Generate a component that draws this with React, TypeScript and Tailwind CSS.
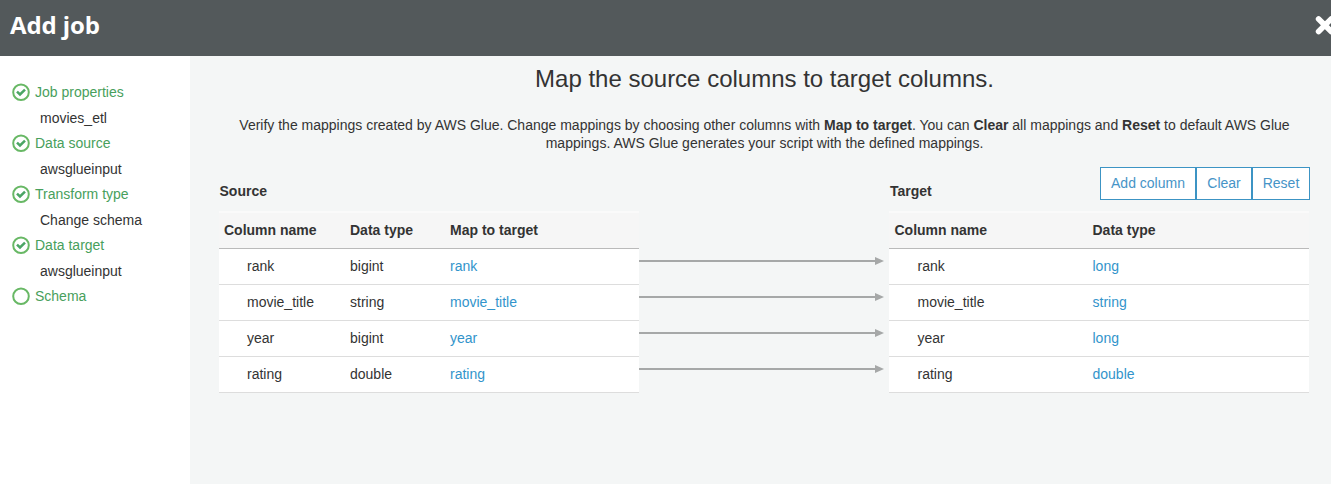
import React from "react";

const steps = [
  { label: "Job properties", value: "movies_etl", done: true },
  { label: "Data source", value: "awsglueinput", done: true },
  { label: "Transform type", value: "Change schema", done: true },
  { label: "Data target", value: "awsglueinput", done: true },
  { label: "Schema", value: "", done: false },
];

const rows = [
  { name: "rank", source: "bigint", target: "long" },
  { name: "movie_title", source: "string", target: "string" },
  { name: "year", source: "bigint", target: "long" },
  { name: "rating", source: "double", target: "double" },
];

function StepIcon({ done }: { done: boolean }) {
  return (
    <svg width="18" height="18" viewBox="0 0 18 18" fill="none" className="shrink-0">
      <circle cx="9" cy="9.2" r="7.8" stroke="#68b865" strokeWidth="2" />
      {done && <path d="M5 8.6 8 11.5 13 6.6" stroke="#4aa564" strokeWidth="2.5" />}
    </svg>
  );
}

function Arrow() {
  return (
    <svg width="245" height="10" viewBox="0 0 245 10" className="block">
      <path d="M0 5H238" stroke="#a6a8a8" strokeWidth="2" />
      <path d="M236 1 245 5 236 9Z" fill="#a6a8a8" />
    </svg>
  );
}

const headRow = "flex h-[38px] items-center border-t-2 border-b border-t-[#fafafa] border-b-[#bababa] bg-[#f6f6f6] pb-px font-bold";
const bodyRow = "flex h-9 items-center border-b border-[#dddddd] bg-white pb-px";

export default function App() {
  return (
    <div className="flex h-[484px] w-[1331px] flex-col overflow-hidden bg-white font-['Liberation_Sans',Arial,sans-serif] text-[14px] leading-[18px] text-[#333333]">
      <header className="flex h-14 shrink-0 items-center justify-between overflow-hidden bg-[#53595b] pb-[6px] pl-[10px] text-white">
        <h1 className="font-['Open_Sans',sans-serif] text-[24px] font-bold leading-8 tracking-[-0.1px]">Add job</h1>
        <button aria-label="Close" className="-mr-[4px]">
          <svg width="20" height="20" viewBox="0 0 20 20" fill="none" stroke="white" strokeWidth="5.6" strokeLinecap="round">
            <path d="M3.6 3.9 16.2 16.5M16.2 3.9 3.6 16.5" />
          </svg>
        </button>
      </header>
      <div className="flex flex-1">
        <aside className="w-[190px] shrink-0 pt-[27px] pl-3">
          {steps.map((s) => (
            <div key={s.label} className="h-[51px]">
              <div className="flex items-center gap-[5px] text-[#48a05c]">
                <StepIcon done={s.done} />
                {s.label}
              </div>
              <div className="mt-2 pl-7">{s.value}</div>
            </div>
          ))}
        </aside>
        <main className="flex-1 bg-[#f4f6f6] pr-[22px] pl-[29px]">
          <h2 className="mt-2 pl-px text-center text-[24px] leading-[30px]">Map the source columns to target columns.</h2>
          <p className="mt-[22px] pl-px text-center">
            Verify the mappings created by AWS Glue. Change mappings by choosing other columns with <b>Map to target</b>. You can <b>Clear</b> all mappings and <b>Reset</b> to default AWS Glue
            <br />
            mappings. AWS Glue generates your script with the defined mappings.
          </p>
          <div className="mt-[15px] flex">
            <section className="w-[420px]">
              <h3 className="h-[44px] pt-[15px] pl-[0.5px] font-bold">Source</h3>
              <div className={`${headRow} pl-[5px]`}>
                <span className="w-[126px]">Column name</span>
                <span className="w-[100px]">Data type</span>
                <span>Map to target</span>
              </div>
              {rows.map((r) => (
                <div key={r.name} className={`${bodyRow} pl-[5px]`}>
                  <span className="w-[126px] pl-[23px]">{r.name}</span>
                  <span className="w-[100px]">{r.source}</span>
                  <a className="text-[#3294cb]">{r.name}</a>
                </div>
              ))}
            </section>
            <div className="flex w-[250px] flex-col gap-[26px] pt-[89px]">
              {rows.map((r) => (
                <Arrow key={r.name} />
              ))}
            </div>
            <section className="w-[420px]">
              <div className="flex h-[44px] justify-between">
                <h3 className="pt-[15px] pl-px font-bold">Target</h3>
                <div className="-mr-px flex h-[33px] text-[#4694c7]">
                  <button className="w-24 border border-[#3c94c4] bg-white pb-0.5">Add column</button>
                  <button className="w-14 border border-[#3c94c4] bg-white pb-0.5">Clear</button>
                  <button className="w-[58px] border border-[#3c94c4] bg-white pb-0.5">Reset</button>
                </div>
              </div>
              <div className={`${headRow} pl-[5.5px]`}>
                <span className="w-[198px]">Column name</span>
                <span>Data type</span>
              </div>
              {rows.map((r) => (
                <div key={r.name} className={`${bodyRow} pl-[5.5px]`}>
                  <span className="w-[198px] pl-[23px]">{r.name}</span>
                  <a className="text-[#3294cb]">{r.target}</a>
                </div>
              ))}
            </section>
          </div>
        </main>
      </div>
    </div>
  );
}
